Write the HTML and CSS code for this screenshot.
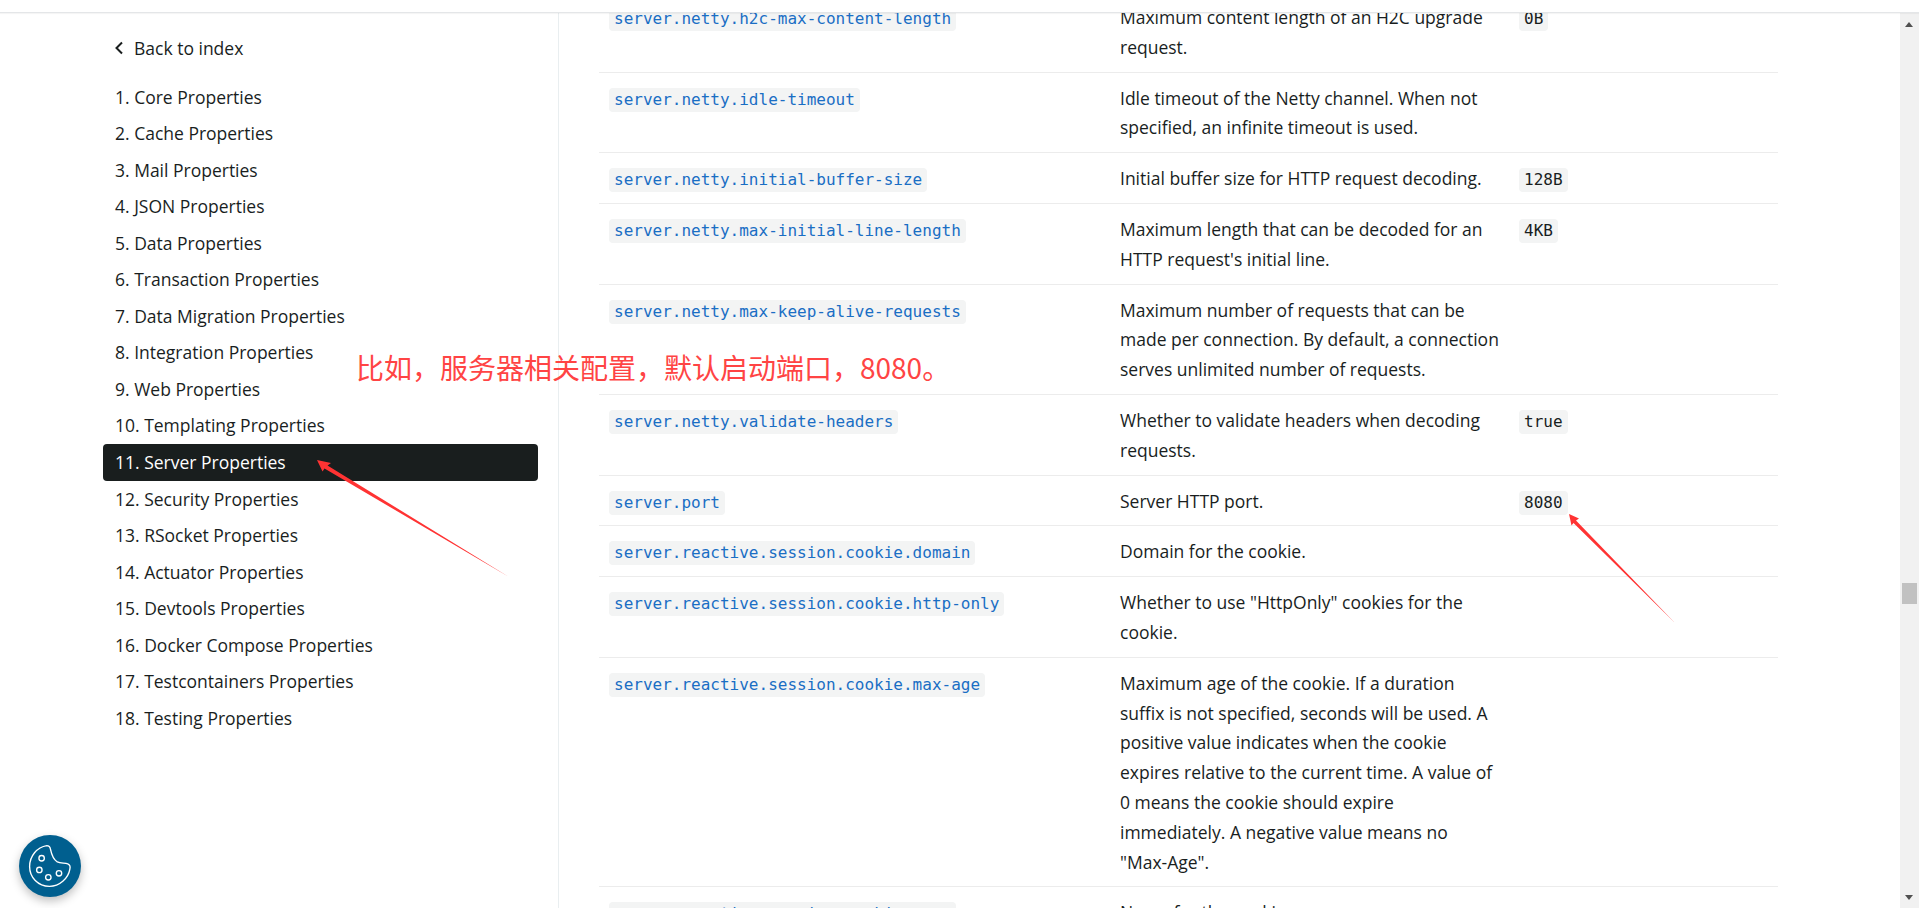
FILE: index.html
```html
<!DOCTYPE html>
<html lang="en">
<head>
<meta charset="utf-8">
<title>Server Properties</title>
<link rel="stylesheet" href="styles.css">
</head>
<body>
<div class="page">
  <header class="topbar"></header>
  <div class="layout">
    <nav class="sidebar">
      <a class="back">
        <svg class="chev" viewBox="0 0 10 14" width="10" height="14"><path d="M8 1.500 2.500 7 8 12.500" fill="none" stroke="#191e1e" stroke-width="2"/></svg>
        <span>Back to index</span>
      </a>
      <ul class="toc">
        <li>1. Core Properties</li>
        <li>2. Cache Properties</li>
        <li>3. Mail Properties</li>
        <li>4. JSON Properties</li>
        <li>5. Data Properties</li>
        <li>6. Transaction Properties</li>
        <li>7. Data Migration Properties</li>
        <li>8. Integration Properties</li>
        <li>9. Web Properties</li>
        <li>10. Templating Properties</li>
        <li class="active">11. Server Properties</li>
        <li>12. Security Properties</li>
        <li>13. RSocket Properties</li>
        <li>14. Actuator Properties</li>
        <li>15. Devtools Properties</li>
        <li>16. Docker Compose Properties</li>
        <li>17. Testcontainers Properties</li>
        <li>18. Testing Properties</li>
      </ul>
    </nav>
    <main class="content">
      <table class="props">
        <colgroup><col class="c1"><col class="c2"><col class="c3"></colgroup>
        <tbody>
          <tr><td><code class="key">server.netty.h2c-max-content-length</code></td><td>Maximum content length of an H2C upgrade request.</td><td><code>0B</code></td></tr>
          <tr><td><code class="key">server.netty.idle-timeout</code></td><td>Idle timeout of the Netty channel. When not specified, an infinite timeout is used.</td><td></td></tr>
          <tr><td><code class="key">server.netty.initial-buffer-size</code></td><td>Initial buffer size for HTTP request decoding.</td><td><code>128B</code></td></tr>
          <tr><td><code class="key">server.netty.max-initial-line-length</code></td><td>Maximum length that can be decoded for an HTTP request's initial line.</td><td><code>4KB</code></td></tr>
          <tr><td><code class="key">server.netty.max-keep-alive-requests</code></td><td>Maximum number of requests that can be made per connection. By default, a connection serves unlimited number of requests.</td><td></td></tr>
          <tr><td><code class="key">server.netty.validate-headers</code></td><td>Whether to validate headers when decoding requests.</td><td><code>true</code></td></tr>
          <tr><td><code class="key">server.port</code></td><td>Server HTTP port.</td><td><code>8080</code></td></tr>
          <tr><td><code class="key">server.reactive.session.cookie.domain</code></td><td>Domain for the cookie.</td><td></td></tr>
          <tr><td><code class="key">server.reactive.session.cookie.http-only</code></td><td>Whether to use "HttpOnly" cookies for the cookie.</td><td></td></tr>
          <tr><td><code class="key">server.reactive.session.cookie.max-age</code></td><td>Maximum age of the cookie. If a duration suffix is not specified, seconds will be used. A positive value indicates when the cookie expires relative to the current time. A value of 0 means the cookie should expire immediately. A negative value means no "Max-Age".</td><td></td></tr>
          <tr><td><code class="key">server.reactive.session.cookie.name</code></td><td>Name for the cookie.</td><td></td></tr>
        </tbody>
      </table>
    </main>
    <div class="scrollbar">
      <span class="arrow up"></span>
      <span class="thumb"></span>
      <span class="arrow down"></span>
    </div>
  </div>
  <div class="note">比如，服务器相关配置，默认启动端口，8080。</div>
  <svg class="marks" width="1919" height="908" viewBox="0 0 1919 908">
    <path d="M317 460 L331 463 L327.500 465.500 L509 577 L324.500 468.500 L322.500 471.500 Z" fill="#ff3333"/>
    <path d="M1569 514 L1579 518.500 L1576 520.500 L1675 623 L1573.500 523 L1571.500 525.500 Z" fill="#ff3333"/>
  </svg>
  <button class="cookie" aria-label="Cookie settings">
    <svg viewBox="0 0 44 44" width="46" height="46">
      <path d="M19 2.500 C21 2.500 22 3.500 22.500 6 C23.500 11 25 15.500 29 18 C32 19.500 36 19 39 20 C41.500 21 41.500 23 41 25 C39.500 34 31 41.500 21.500 41.500 C10.500 41.500 2.500 33 2.500 22.500 C2.500 12.500 9.500 4 19 2.500 Z" fill="none" stroke="#fff" stroke-width="1.300"/>
      <circle cx="14" cy="14.600" r="2.600" fill="none" stroke="#fff" stroke-width="1.300"/>
      <circle cx="11.800" cy="25.800" r="2.600" fill="none" stroke="#fff" stroke-width="1.300"/>
      <circle cx="20.400" cy="32.800" r="2.600" fill="none" stroke="#fff" stroke-width="1.300"/>
      <circle cx="30.600" cy="29" r="2.600" fill="none" stroke="#fff" stroke-width="1.300"/>
    </svg>
  </button>
</div>
</body>
</html>
```
FILE: styles.css
```css
* { box-sizing: border-box; }
html, body { margin: 0; height: 100%; overflow: hidden; background: #fff; }
body { font-family: "Open Sans", "Noto Sans", sans-serif; font-size: 17.500px; color: #191e1e; }
.page { position: relative; width: 1919px; height: 908px; display: flex; flex-direction: column; overflow: hidden; }
.topbar { flex: 0 0 13px; background: #fff; border-bottom: 1px solid #e4e6e8; box-shadow: 0 1px 1px rgba(0,0,0,.04); position: relative; z-index: 2; }
.layout { flex: 1; display: flex; min-height: 0; }
.sidebar { flex: 0 0 559px; border-right: 1px solid #e9eef0; padding: 20px 20px 0 103px; }
.back { display: flex; align-items: center; gap: 10px; height: 30px; padding-left: 11px; }
.chev { display: block; }
.toc { list-style: none; margin: 15.500px 0 0; padding: 0; }
.toc li { height: 36.550px; line-height: 36.550px; padding-left: 12px; white-space: nowrap; border-radius: 4px; }
.toc li.active { background: #191e1e; color: #fff; }
.content { flex: 1; min-width: 0; overflow: hidden; padding-left: 40px; }
.props { width: 1179px; table-layout: fixed; border-collapse: collapse; margin-top: -21px; }
.c1 { width: 511px; } .c2 { width: 399px; } .c3 { width: 269px; }
.props td { padding: 11px 10px 9px; vertical-align: top; line-height: 29.800px; border-bottom: 1px solid #ececec; }
code { font-family: "DejaVu Sans Mono", monospace; font-size: 16px; line-height: 24px; display: inline-block; background: #f3f4f4; border-radius: 4px; padding: 0 5px; color: #191e1e; }
code.key { color: #1a6ec4; }
.scrollbar { flex: 0 0 19px; background: #f1f1f1; position: relative; display: flex; flex-direction: column; align-items: center; }
.arrow { position: absolute; left: 5px; width: 0; height: 0; border-left: 4.500px solid transparent; border-right: 4.500px solid transparent; }
.arrow.up { top: 9px; border-bottom: 5px solid #505050; }
.arrow.down { bottom: 8px; border-top: 5px solid #505050; }
.thumb { position: absolute; top: 570px; left: 2px; width: 15px; height: 21px; background: #c1c1c1; }
.note { position: absolute; left: 356px; top: 346px; font-family: "Noto Sans CJK SC", sans-serif; font-size: 28px; line-height: 42px; color: #ff4444; white-space: nowrap; z-index: 3; }
.marks { position: absolute; left: 0; top: 0; z-index: 3; pointer-events: none; }
.cookie { position: absolute; left: 19px; top: 835px; width: 62px; height: 62px; border: 0; border-radius: 50%; padding: 0; background: #005f8f; box-shadow: 0 4px 10px rgba(0,0,0,.25); display: flex; align-items: center; justify-content: center; z-index: 4; }
```
